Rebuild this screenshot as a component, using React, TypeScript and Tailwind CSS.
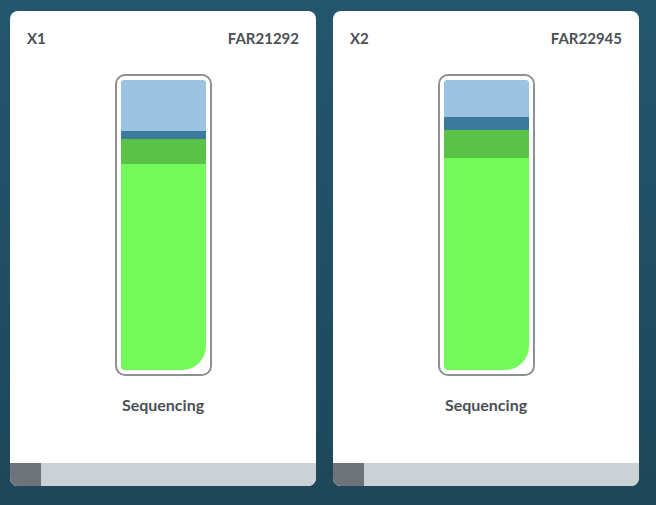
const font = { fontFamily: "Lato, 'Open Sans', sans-serif" };

type Layer = { readonly color: string; readonly height: number };

type Slot = {
  readonly name: string;
  readonly flowcell: string;
  readonly layers: readonly Layer[];
};

const slots: Slot[] = [
  {
    name: "X1",
    flowcell: "FAR21292",
    layers: [
      { color: "bg-[#9dc3e3]", height: 51 },
      { color: "bg-[#3b7a9c]", height: 8 },
      { color: "bg-[#59c247]", height: 25 },
    ],
  },
  {
    name: "X2",
    flowcell: "FAR22945",
    layers: [
      { color: "bg-[#9dc3e3]", height: 37 },
      { color: "bg-[#3b7a9c]", height: 13 },
      { color: "bg-[#59c247]", height: 28 },
    ],
  },
];

function Tube({ layers }: { readonly layers: readonly Layer[] }) {
  return (
    <div className="h-[302px] w-[97px] rounded-[10px] border-2 border-[#8d9196] bg-white p-[4px]">
      <div className="flex h-full w-full flex-col overflow-hidden rounded-t-[4px] rounded-bl-[4px] rounded-br-[24px] bg-[#74f95a]">
        {layers.map((l, i) => (
          <div key={i} className={l.color} style={{ height: l.height }} />
        ))}
      </div>
    </div>
  );
}

function SlotCard({ slot }: { readonly slot: Slot }) {
  return (
    <div className="flex h-[475px] w-[306px] flex-col overflow-hidden rounded-[8px] bg-white">
      <div className="flex items-center justify-between px-[17px] pt-[17px] text-[15px] font-bold leading-[20px] text-[#4b5056]">
        <span>{slot.name}</span>
        <span>{slot.flowcell}</span>
      </div>
      <div className="mt-[26px] flex justify-center">
        <Tube layers={slot.layers} />
      </div>
      <div className="mt-[19px] text-center text-[16px] font-bold leading-[20px] text-[#4b5056]">Sequencing</div>
      <div className="mt-auto flex h-[23px] bg-[#ccd1d6]">
        <div className="w-[31px] bg-[#6e7379]" />
      </div>
    </div>
  );
}

export default function App() {
  return (
    <div
      className="flex h-[505px] w-[656px] gap-[17px] bg-gradient-to-b from-[#24566f] to-[#1e4759] pl-[10px] pt-[11px]"
      style={font}
    >
      {slots.map((s) => (
        <SlotCard key={s.name} slot={s} />
      ))}
    </div>
  );
}
